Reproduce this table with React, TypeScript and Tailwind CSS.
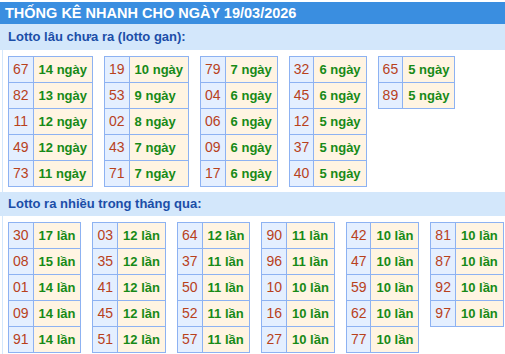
import React from 'react';

// Lotto gan - numbers that have not come out for a while
const ganTables = [
  [['67', '14'], ['82', '13'], ['11', '12'], ['49', '12'], ['73', '11']],
  [['19', '10'], ['53', '9'], ['02', '8'], ['43', '7'], ['71', '7']],
  [['79', '7'], ['04', '6'], ['06', '6'], ['09', '6'], ['17', '6']],
  [['32', '6'], ['45', '6'], ['12', '5'], ['37', '5'], ['40', '5']],
  [['65', '5'], ['89', '5']],
];

// Lotto that came out the most in the last month
const nhieuTables = [
  [['30', '17'], ['08', '15'], ['01', '14'], ['09', '14'], ['91', '14']],
  [['03', '12'], ['35', '12'], ['41', '12'], ['45', '12'], ['51', '12']],
  [['64', '12'], ['37', '11'], ['50', '11'], ['52', '11'], ['57', '11']],
  [['90', '11'], ['96', '11'], ['10', '10'], ['16', '10'], ['27', '10']],
  [['42', '10'], ['47', '10'], ['59', '10'], ['62', '10'], ['77', '10']],
  [['81', '10'], ['87', '10'], ['92', '10'], ['97', '10']],
];

function LotoTable({ rows, unit }: { rows: string[][]; unit: string }) {
  return (
    <table className="border-collapse border border-[#8db2f2]">
      <tbody>
        {rows.map((r) => (
          <tr key={r[0]}>
            <td className="h-[26px] px-[4px] border border-[#8db2f2] bg-[#e4efff] text-[#b8411c] text-[14px] text-center">
              {r[0]}
            </td>
            <td className="h-[26px] px-[5px] border border-[#8db2f2] bg-[#fff4e2] text-[#178a17] text-[13px] font-bold whitespace-nowrap">
              {r[1]} {unit}
            </td>
          </tr>
        ))}
      </tbody>
    </table>
  );
}

export default function App() {
  return (
    <div className="w-[505px] h-[354px] overflow-hidden bg-white pt-[2px]" style={{ fontFamily: '"Liberation Sans", Arial, sans-serif' }}>
      <div className="h-[22px] bg-[#3a8ee0] text-white font-bold text-[14.5px] leading-[22px] pl-[5px] whitespace-nowrap">
        THỐNG KÊ NHANH CHO NGÀY 19/03/2026
      </div>

      <div className="h-[26px] bg-[#d3e7fb] text-[#1b4ea8] font-bold text-[13px] leading-[26px] pl-[8px]">
        Lotto lâu chưa ra (lotto gan):
      </div>
      <div className="ml-[2px] border-l border-[#d3e7fb] pl-[5px] pt-[6px] pb-[5px] flex items-start gap-[11px]">
        {ganTables.map((t, i) => (
          <LotoTable key={i} rows={t} unit="ngày" />
        ))}
      </div>

      <div className="h-[24px] bg-[#d3e7fb] text-[#1b4ea8] font-bold text-[13px] leading-[24px] pl-[8px]">
        Lotto ra nhiều trong tháng qua:
      </div>
      <div className="ml-[2px] border-l border-[#d3e7fb] pl-[5px] pt-[6px] pb-[5px] flex items-start gap-[11px]">
        {nhieuTables.map((t, i) => (
          <LotoTable key={i} rows={t} unit="lần" />
        ))}
      </div>
    </div>
  );
}
